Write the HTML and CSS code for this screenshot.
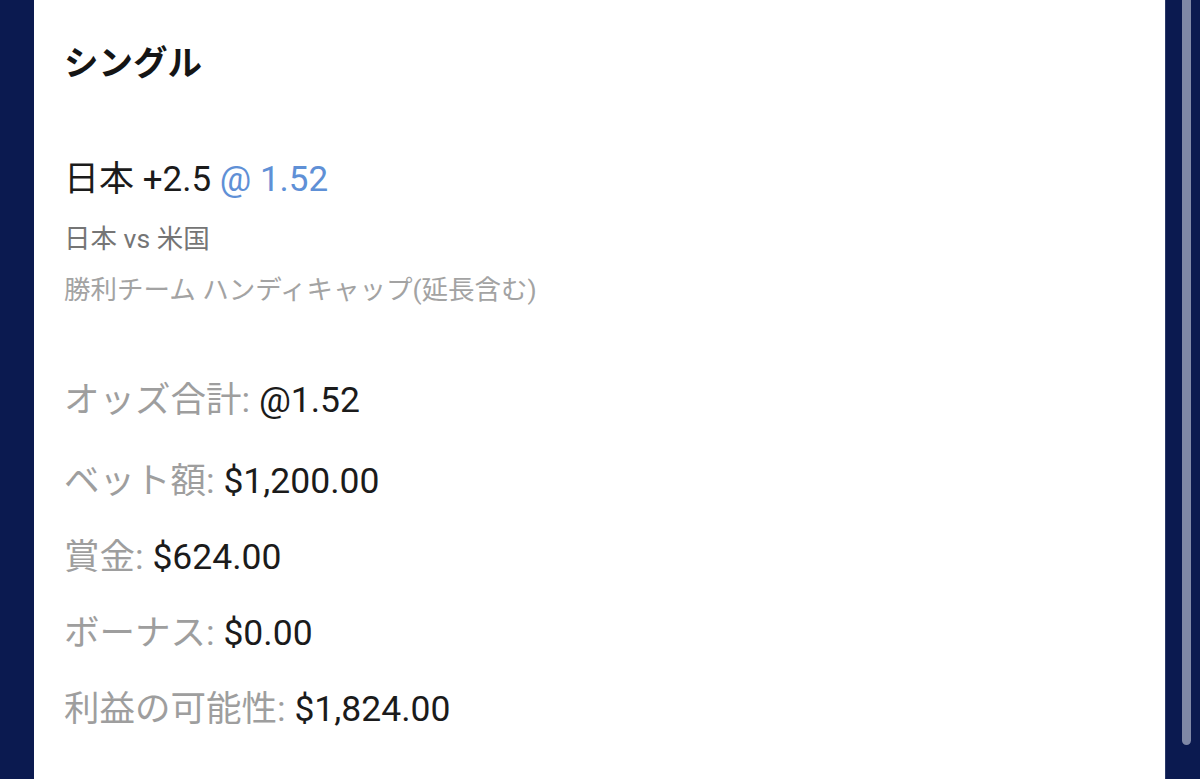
FILE: index.html
```html
<!DOCTYPE html>
<html lang="ja">
<head>
<meta charset="utf-8">
<link rel="stylesheet" href="styles.css">
</head>
<body>
<div class="frame">
  <div class="edge-left"></div>
  <main class="card">
    <h1 class="title">シングル</h1>
    <div class="selection">
      <div class="pick">日本 +2.5 <span class="odds">@ 1.52</span></div>
      <div class="event">日本 vs 米国</div>
      <div class="market">勝利チーム ハンディキャップ(延長含む)</div>
    </div>
    <div class="summary">
      <div class="row first"><span class="label">オッズ合計:</span> <span class="value">@1.52</span></div>
      <div class="row"><span class="label">ベット額:</span> <span class="value">$1,200.00</span></div>
      <div class="row"><span class="label">賞金:</span> <span class="value">$624.00</span></div>
      <div class="row"><span class="label">ボーナス:</span> <span class="value">$0.00</span></div>
      <div class="row"><span class="label">利益の可能性:</span> <span class="value">$1,824.00</span></div>
    </div>
  </main>
  <div class="edge-right">
    <div class="scroll-thumb"></div>
  </div>
</div>
</body>
</html>
```

FILE: styles.css
```css
html, body {
  margin: 0;
  padding: 0;
  height: 100%;
  overflow: hidden;
  background: #0b1a50;
}
body {
  font-family: Roboto, "Noto Sans CJK JP", sans-serif;
  color: #1b1b1b;
}
.frame {
  display: flex;
  height: 779px;
}
.edge-left {
  width: 34px;
  flex: none;
  background: #0b1a50;
}
.card {
  width: 1131px;
  flex: none;
  background: #ffffff;
  padding: 43px 0 0 30px;
  box-sizing: border-box;
}
.title {
  margin: 0;
  font-size: 34.5px;
  line-height: 40px;
  font-weight: 700;
  color: #151515;
}
.selection {
  margin-top: 77px;
}
.pick {
  font-size: 35px;
  line-height: 40px;
  color: #1b1b1b;
}
.odds {
  color: #5f90d6;
}
.event {
  margin-top: 24px;
  font-size: 26.5px;
  line-height: 30px;
  color: #757575;
}
.market {
  margin-top: 21px;
  font-size: 26.5px;
  line-height: 30px;
  color: #a3a3a3;
}
.summary {
  margin-top: 75px;
  display: flex;
  flex-direction: column;
  gap: 36px;
}
.row {
  font-size: 35.5px;
  line-height: 40px;
}
.row.first {
  margin-bottom: 5px;
}
.label {
  color: #9e9e9e;
}
.value {
  color: #1b1b1b;
}
.edge-right {
  flex: 1;
  background: #0b1a50;
  border-left: 1px solid #2a3868;
  padding-left: 16px;
}
.scroll-thumb {
  width: 9px;
  height: 745px;
  background: #7f88a6;
  border-radius: 0 0 5px 5px;
}
```
